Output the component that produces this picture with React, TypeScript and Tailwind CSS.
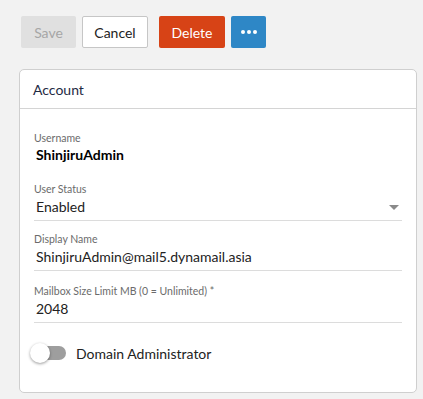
const font = { fontFamily: 'Lato, "Open Sans", sans-serif' };

function Field({
    label,
    value,
    className = '',
    select = false,
}: {
    label: string;
    value: string;
    className?: string;
    select?: boolean;
}) {
    return (
        <div className={`border-b border-[#dcdcdc] pb-[3px] ${className}`}>
            <div className="text-[10.5px] leading-4 text-[#6b6b6b]">{label}</div>
            <div className="flex items-center justify-between">
                <span className="pl-[2px] text-[14px] leading-5 text-[#222]">{value}</span>
                {select && (
                    <span className="mr-[3px] h-0 w-0 border-x-[5px] border-t-[5px] border-x-transparent border-t-[#8a8a8a]" />
                )}
            </div>
        </div>
    );
}

export default function App() {
    return (
        <div className="min-h-[399px] w-[423px] bg-[#f2f2f2] px-[19px] pt-4" style={font}>
            {/* Toolbar */}
            <div className="ml-[2px] flex items-center text-[14px]">
                <button className="h-8 w-[55px] rounded-[2px] bg-[#e0e0e0] text-[#a6a6a6]">Save</button>
                <button className="ml-[6px] h-8 w-[66px] rounded-[2px] border border-[#c6c6c6] bg-white text-[#222]">
                    Cancel
                </button>
                <button className="ml-[11px] h-8 w-[66px] rounded-[2px] bg-[#d74316] text-white">Delete</button>
                <button className="ml-[6px] flex h-8 w-[35px] items-center justify-center gap-[2px] rounded-[2px] bg-[#2e87c6]">
                    <span className="h-[4px] w-[4px] rounded-full bg-white" />
                    <span className="h-[4px] w-[4px] rounded-full bg-white" />
                    <span className="h-[4px] w-[4px] rounded-full bg-white" />
                </button>
            </div>

            {/* Account card */}
            <div className="mt-[21px] w-[398px] rounded-[5px] border border-[#cfcfcf] bg-white">
                <div className="flex h-[39px] items-center border-b border-[#d4d4d4] px-[13px] text-[14px] text-[#1f2a44]">
                    Account
                </div>
                <div className="px-[14px] pb-[29px] pt-[21px]">
                    <div>
                        <div className="text-[10.5px] leading-4 text-[#6b6b6b]">Username</div>
                        <div className="pl-[2px] text-[14px] font-bold leading-[18px] text-black">ShinjiruAdmin</div>
                    </div>
                    <Field className="mt-[17px]" label="User Status" value="Enabled" select />
                    <Field className="mt-[10px]" label="Display Name" value="ShinjiruAdmin@mail5.dynamail.asia" />
                    <Field className="mt-[12px]" label="Mailbox Size Limit MB (0 = Unlimited) *" value="2048" />
                    <div className="mt-[20px] flex h-5 items-center">
                        <div className="relative ml-[-2px] h-[14px] w-[34px] rounded-full bg-[#9e9e9e]">
                            <span className="absolute left-[-2px] top-[-3px] h-5 w-5 rounded-full bg-white shadow-[0_1px_3px_rgba(0,0,0,0.4)]" />
                        </div>
                        <span className="ml-[10px] text-[14px] text-[#222]">Domain Administrator</span>
                    </div>
                </div>
            </div>
        </div>
    );
}
